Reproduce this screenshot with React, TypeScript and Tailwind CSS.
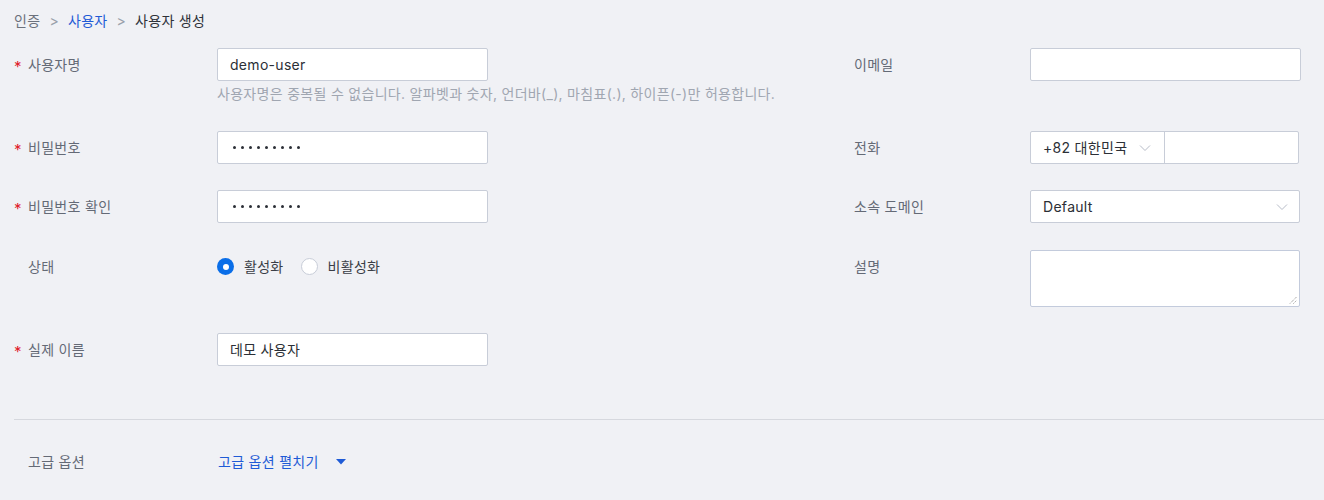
import React from 'react';

const font = { fontFamily: '"Inter", "Noto Sans CJK KR", sans-serif' };

function Chevron() {
    return (
        <svg width="12" height="8" viewBox="0 0 12 8" fill="none" className="shrink-0">
            <polyline points="1,1.5 6,6.5 11,1.5" stroke="#b7bcc8" strokeWidth="1" />
        </svg>
    );
}

function Label({ text, required }: { text: string; required?: boolean }) {
    return (
        <div className="flex h-[33px] items-center text-[14px] text-[#646a76]">
            <span className="relative top-[3px] w-[14px] text-[15px] text-[#e0202a]">{required ? '*' : ''}</span>
            <span>{text}</span>
        </div>
    );
}

function TextInput({ value }: { value?: string }) {
    return (
        <div className="flex h-[33px] w-[271px] items-center rounded-[2px] border border-[#c8cdd8] bg-white px-3 text-[14px] text-[#2b2f36]">
            {value}
        </div>
    );
}

function Dots() {
    return (
        <div className="flex h-[33px] w-[271px] items-center gap-[5px] rounded-[2px] border border-[#c8cdd8] bg-white px-[15px]">
            {Array.from({ length: 9 }).map((_, i) => (
                <span key={i} className="h-[3px] w-[3px] rounded-full bg-[#2b2f36]" />
            ))}
        </div>
    );
}

export default function App() {
    return (
        <div style={font} className="min-h-[500px] w-full bg-[#f0f1f5] pl-[14px] pt-[10px] tracking-[0.3px]">
            {/* breadcrumb */}
            <div className="flex h-[20px] items-center gap-[9px] text-[14px]">
                <span className="text-[#6b717c]">인증</span>
                <span className="text-[#9aa0aa]">&gt;</span>
                <span className="text-[#1f5bd6]">사용자</span>
                <span className="text-[#9aa0aa]">&gt;</span>
                <span className="text-[#2e3239]">사용자 생성</span>
            </div>

            <div className="mt-[18px] flex flex-col gap-[26px]">
                {/* row 1 */}
                <div className="flex items-start">
                    <div className="w-[203px]"><Label text="사용자명" required /></div>
                    <div className="w-[623px]">
                        <TextInput value="demo-user" />
                        <div className="mt-[2px] h-[22px] text-[14px] leading-[21px] text-[#a0a6b1]">
                            사용자명은 중복될 수 없습니다. 알파벳과 숫자, 언더바(_), 마침표(.), 하이픈(-)만 허용합니다.
                        </div>
                    </div>
                    <div className="w-[190px]"><Label text="이메일" /></div>
                    <TextInput />
                </div>

                {/* row 2 */}
                <div className="flex items-start">
                    <div className="w-[203px]"><Label text="비밀번호" required /></div>
                    <div className="w-[623px]"><Dots /></div>
                    <div className="w-[190px]"><Label text="전화" /></div>
                    <div className="flex h-[33px] w-[269px] rounded-[2px] border border-[#c8cdd8] bg-white text-[14px] text-[#2b2f36]">
                        <div className="flex w-[134px] items-center justify-between border-r border-[#c8cdd8] pl-3 pr-[13px]">
                            <span>+82 대한민국</span>
                            <Chevron />
                        </div>
                        <div className="flex-1" />
                    </div>
                </div>

                {/* row 3 */}
                <div className="flex items-start">
                    <div className="w-[203px]"><Label text="비밀번호 확인" required /></div>
                    <div className="w-[623px]"><Dots /></div>
                    <div className="w-[190px]"><Label text="소속 도메인" /></div>
                    <div className="flex h-[33px] w-[270px] items-center justify-between rounded-[2px] border border-[#c8cdd8] bg-white pl-3 pr-[11px] text-[14px] text-[#2b2f36]">
                        <span>Default</span>
                        <Chevron />
                    </div>
                </div>

                {/* row 4 */}
                <div className="mt-[1px] flex items-start">
                    <div className="w-[203px]"><Label text="상태" /></div>
                    <div className="flex h-[33px] w-[623px] items-center text-[14px] text-[#3a3e46]">
                        <span className="flex h-[17px] w-[17px] items-center justify-center rounded-full bg-[#0a6ee8]">
                            <span className="h-[6px] w-[6px] rounded-full bg-white" />
                        </span>
                        <span className="ml-[10px]">활성화</span>
                        <span className="ml-[17px] h-[17px] w-[17px] rounded-full border border-[#c8cdd8] bg-white" />
                        <span className="ml-[10px]">비활성화</span>
                    </div>
                    <div className="w-[190px]"><Label text="설명" /></div>
                    <div className="relative h-[57px] w-[270px] rounded-[2px] border border-[#c3cbdc] bg-white">
                        <svg width="8" height="8" viewBox="0 0 8 8" className="absolute bottom-[2px] right-[2px]">
                            <line x1="1" y1="7.5" x2="7.5" y2="1" stroke="#666" strokeWidth="0.8" strokeDasharray="1 1" />
                            <line x1="4.5" y1="7.5" x2="7.5" y2="4.5" stroke="#666" strokeWidth="0.8" strokeDasharray="1 1" />
                        </svg>
                    </div>
                </div>

                {/* row 5 */}
                <div className="flex items-start">
                    <div className="w-[203px]"><Label text="실제 이름" required /></div>
                    <TextInput value="데모 사용자" />
                </div>
            </div>

            <div className="mt-[53px] border-t border-[#d6d8de]" />

            <div className="flex h-[87px] items-center pb-[4px] text-[14px]">
                <div className="w-[204px] pl-[14px] text-[#646a76]">고급 옵션</div>
                <div className="flex items-center text-[#1f5bd6]">
                    <span>고급 옵션 펼치기</span>
                    <svg width="10" height="6" viewBox="0 0 10 6" className="ml-[17px]">
                        <polygon points="0,0 10,0 5,5.5" fill="#1f5bd6" />
                    </svg>
                </div>
            </div>
        </div>
    );
}
